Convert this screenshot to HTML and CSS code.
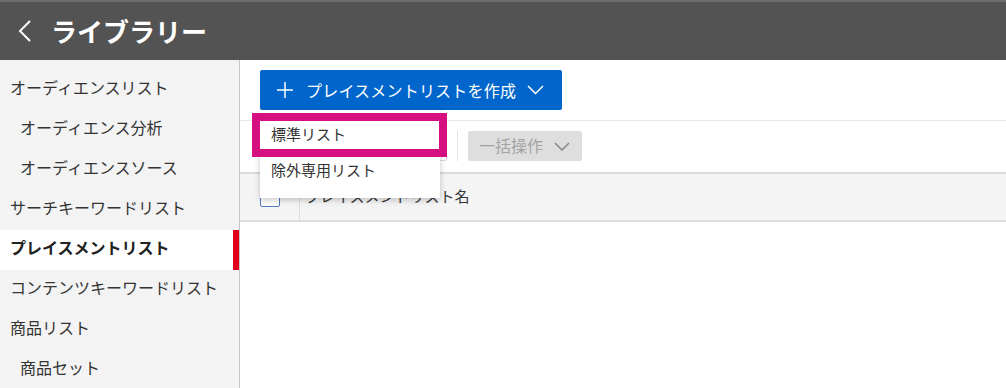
FILE: index.html
```html
<!DOCTYPE html>
<html lang="ja">
<head>
<meta charset="utf-8">
<link rel="stylesheet" href="styles.css">
</head>
<body>
<header class="topbar">
  <svg class="back" width="16" height="24" viewBox="0 0 16 24"><polyline points="13,2 3,12 13,22" fill="none" stroke="#fff" stroke-width="2"/></svg>
  <h1 class="title">ライブラリー</h1>
</header>
<div class="main">
  <nav class="sidebar">
    <div class="nav-item">オーディエンスリスト</div>
    <div class="nav-item sub">オーディエンス分析</div>
    <div class="nav-item sub">オーディエンスソース</div>
    <div class="nav-item">サーチキーワードリスト</div>
    <div class="nav-item active">プレイスメントリスト</div>
    <div class="nav-item">コンテンツキーワードリスト</div>
    <div class="nav-item">商品リスト</div>
    <div class="nav-item sub">商品セット</div>
  </nav>
  <section class="content">
    <div class="actions">
      <button class="primary">
        <svg width="16" height="16" viewBox="0 0 16 16"><path d="M8 0V16M0 8H16" stroke="#fff" stroke-width="1.5"/></svg>
        <span class="primary-label">プレイスメントリストを作成</span>
        <svg width="17" height="10" viewBox="0 0 17 10"><polyline points="1,1 8.5,8.5 16,1" fill="none" stroke="#fff" stroke-width="1.5"/></svg>
      </button>
    </div>
    <div class="toolbar">
      <button class="plain" aria-label="リストに追加"></button>
      <span class="sep"></span>
      <button class="disabled">
        <span>一括操作</span>
        <svg width="16" height="9" viewBox="0 0 16 9"><polyline points="1,1 8,8 15,1" fill="none" stroke="#888" stroke-width="1.5"/></svg>
      </button>
    </div>
    <div class="thead">
      <div class="th-check"><span class="checkbox"></span></div>
      <div class="th-name">プレイスメントリスト名</div>
    </div>
    <div class="menu">
      <div class="menu-item highlighted">標準リスト<span class="mark"></span></div>
      <div class="menu-item">除外専用リスト</div>
    </div>
  </section>
</div>
</body>
</html>
```
FILE: styles.css
```css
* { box-sizing: border-box; }
html, body { margin: 0; height: 100%; }
body {
  font-family: "Noto Sans CJK JP", "Noto Sans", sans-serif;
  color: #333;
  background: #fff;
  overflow: hidden;
}
.topbar {
  height: 60px;
  background: #535353;
  border-top: 2px solid #6c6c6c;
  display: flex;
  align-items: center;
  padding-left: 17px;
}
.back { margin-right: 18px; }
.title {
  margin: 0;
  font-size: 26px;
  font-weight: 700;
  color: #fff;
  line-height: 1;
}
.main {
  display: flex;
  height: calc(100% - 60px);
}
.sidebar {
  width: 240px;
  flex: none;
  background: #f3f3f3;
  border-right: 1px solid #c6c6c6;
  padding-top: 10px;
}
.nav-item {
  height: 40px;
  line-height: 35px;
  font-size: 16px;
  padding-left: 10px;
  color: #333;
  white-space: nowrap;
}
.nav-item.sub { padding-left: 20px; }
.nav-item.active {
  background: #fff;
  font-weight: 700;
  color: #222;
  border-right: 6px solid #e0001b;
}
.content {
  flex: 1;
  position: relative;
  padding-top: 10px;
}
.actions {
  padding: 0 20px 10px;
  display: flex;
}
button { font-family: inherit; }
.primary {
  height: 40px;
  background: #0066cc;
  border: none;
  border-radius: 2px;
  color: #fff;
  font-size: 16px;
  letter-spacing: 0.2px;
  display: flex;
  align-items: center;
  padding: 0 18px 0 17px;
}
.primary-label { margin: 0 11px 0 13px; }
.toolbar {
  border-top: 1px solid #e8e8e8;
  padding: 10px 20px 11px;
  display: flex;
  align-items: center;
}
.plain {
  width: 187px;
  height: 30px;
  border: 1px solid #dcdcdc;
  background: #fff;
  border-radius: 2px;
}
.sep {
  width: 1px;
  height: 30px;
  background: #e2e2e2;
  margin: 0 10px;
}
.disabled {
  height: 30px;
  width: 114px;
  background: #dedede;
  border: none;
  border-radius: 2px;
  color: #a3a3a3;
  font-size: 16px;
  display: flex;
  align-items: center;
  padding: 0 0 2px 11px;
}
.disabled svg { margin-left: 11px; margin-top: 2px; }
.thead {
  height: 50px;
  background: #f4f4f4;
  border-top: 2px solid #dcdcdc;
  border-bottom: 2px solid #dcdcdc;
  display: flex;
}
.th-check {
  width: 60px;
  padding-left: 20px;
  display: flex;
  align-items: center;
  border-right: 1px solid #dcdcdc;
}
.checkbox {
  width: 20px;
  height: 20px;
  border: 1px solid #4f7cc0;
  border-radius: 2px;
  background: #fff;
}
.th-name {
  padding: 0 0 4px 5px;
  display: flex;
  align-items: center;
  font-size: 15px;
  color: #333;
}
.menu {
  position: absolute;
  left: 20px;
  top: 50px;
  width: 180px;
  background: #fff;
  box-shadow: 0 2px 6px rgba(0,0,0,0.22);
  padding: 6px 0 10px;
}
.menu-item {
  position: relative;
  height: 36px;
  line-height: 36px;
  padding-left: 11px;
  font-size: 15px;
  color: #333;
}
.mark {
  position: absolute;
  top: -3px;
  left: -8px;
  right: -7px;
  bottom: -5px;
  border: 8px solid #d60f80;
}
```
